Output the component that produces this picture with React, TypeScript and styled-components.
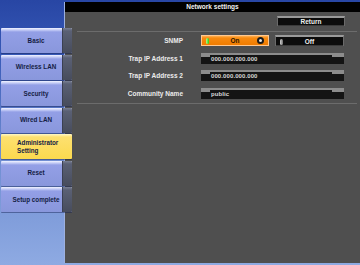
import React from "react";
import styled, { createGlobalStyle } from "styled-components";

const GlobalStyle = createGlobalStyle`
  html, body {
    margin: 0;
    padding: 0;
    background: #8ca8e0;
  }
  body {
    font-family: "Liberation Sans", Arial, sans-serif;
  }
`;

const Screen = styled.div`
  width: 360px;
  height: 265px;
  display: flex;
  flex-flow: row nowrap;
  align-items: flex-start;
  overflow: hidden;
  background: linear-gradient(180deg, #2846a4 0%, #3658b6 20%, #6c8ad0 55%, #8eaae2 100%);
`;

const Sidebar = styled.nav`
  position: relative;
  z-index: 1;
  flex: 0 0 71px;
  padding: 28px 0 0 1px;
  display: flex;
  flex-flow: column nowrap;
  gap: 1.5px;
`;

const Tab = styled.div<{ $active?: boolean }>`
  height: 25px;
  display: flex;
  flex-flow: row nowrap;
  border-radius: 1px;
  overflow: hidden;
  box-shadow: 0 1px 0 rgba(20, 30, 80, 0.45);
  background: ${({ $active }) =>
    $active
      ? "linear-gradient(180deg, #fff8c8 0px, #fde070 3px, #fbd94e 100%)"
      : "linear-gradient(180deg, #f2f4ff 0px, #c4ccf6 2px, #939fe6 4px, #8997dc 100%)"};
`;

const TabFace = styled.div<{ $active?: boolean }>`
  flex: 1 1 auto;
  min-width: 0;
  display: flex;
  align-items: center;
  justify-content: ${({ $active }) => ($active ? "flex-start" : "center")};
  padding: ${({ $active }) => ($active ? "1px 0 0 16px" : "1px 0 0 9px")};
  font: bold 6.3px/8.4px "Liberation Sans", Arial, sans-serif;
  color: #141c44;
  white-space: pre;
`;

const TabEar = styled.div`
  flex: 0 0 9px;
  background: linear-gradient(180deg, #7a8094 0px, #5a6074 3px, #474c5c 100%);
  border-left: 1px solid #3a3f52;
`;

const Panel = styled.main`
  flex: 0 0 295px;
  height: 261px;
  margin: 2px 0 0 -8px;
  background: #4f4f4f;
  border-left: 1px solid #9cb0e0;
  display: flex;
  flex-flow: column nowrap;
`;

const TitleBar = styled.header`
  height: 10px;
  background: #000;
  color: #f2f2f2;
  font: bold 6.5px/10px "Liberation Sans", Arial, sans-serif;
  text-align: center;
`;

const TopRow = styled.div`
  display: flex;
  justify-content: flex-end;
  padding: 4px 15px 0 0;
`;

const Divider = styled.hr<{ $top: number }>`
  margin: ${({ $top }) => $top}px 3px 0 12px;
  border: 0;
  height: 1px;
  background: #6c6c6c;
`;

const DarkButton = styled.button<{ $w: number }>`
  width: ${({ $w }) => $w}px;
  height: 10px;
  padding: 0;
  position: relative;
  background: #0c0c0c;
  border: 0;
  border-top: 2px solid #9a9a9a;
  border-left: 1px solid #6a6a6a;
  border-right: 1px solid #6a6a6a;
  box-shadow: inset 0 -1px 0 #3a3a3a;
  color: #f0f0f0;
  font: bold 6.5px/8px "Liberation Sans", Arial, sans-serif;
  text-align: center;
`;

const Form = styled.div`
  margin: 3px 0 0 0;
  display: grid;
  grid-template-columns: 118px 143px;
  grid-auto-rows: 11px;
  column-gap: 18px;
  row-gap: 6.5px;
`;

const Label = styled.label`
  text-align: right;
  color: #ececec;
  font: bold 6.5px/11px "Liberation Sans", Arial, sans-serif;
  white-space: nowrap;
`;

const Toggle = styled.div`
  display: flex;
  gap: 6px;
`;

const OnButton = styled.button`
  flex: 0 0 68px;
  height: 11px;
  padding: 0;
  position: relative;
  background: linear-gradient(180deg, #ffb050 0px, #f88a10 2px, #f07c00 100%);
  border: 1px solid #ffc890;
  color: #2a1400;
  font: bold 6.5px/9px "Liberation Sans", Arial, sans-serif;
  text-align: center;
`;

const OffButton = styled(DarkButton)`
  flex: 0 0 69px;
  height: 11px;
`;

const Lamp = styled.span<{ $on?: boolean }>`
  position: absolute;
  left: 4px;
  top: 1.5px;
  width: 3px;
  height: 6px;
  border-radius: 2px;
  background: ${({ $on }) =>
    $on ? "linear-gradient(90deg, #b8ff90, #28d010)" : "linear-gradient(90deg, #d0d0d0, #707070)"};
`;

const Radio = styled.span`
  position: absolute;
  right: 4px;
  top: 1px;
  width: 3px;
  height: 3px;
  border-radius: 50%;
  background: #e8e8e8;
  border: 2px solid #1a1a1a;
`;

const Field = styled.div`
  position: relative;
  height: 11px;
  background: #141414;
  border-top: 2px solid #8c8c8c;
  box-sizing: border-box;
  padding-left: 10px;
  color: #d8d8d8;
  font: bold 6px/8px "Liberation Sans", Arial, sans-serif;
  letter-spacing: 0.1px;

  &::before,
  &::after {
    content: "";
    position: absolute;
    top: 0;
    height: 2px;
    background: #8c8c8c;
  }
  &::before {
    left: 0;
    width: 9px;
  }
  &::after {
    right: 0;
    width: 12px;
  }
`;

const tabs = [
  "Basic",
  "Wireless LAN",
  "Security",
  "Wired LAN",
  "Administrator\nSetting",
  "Reset",
  "Setup complete",
];

export default function App() {
  return (
    <>
      <GlobalStyle />
      <Screen>
        <Sidebar>
          {tabs.map((t) => {
            const active = t.startsWith("Administrator");
            return (
              <Tab key={t} $active={active}>
                <TabFace $active={active}>{t}</TabFace>
                {!active && <TabEar />}
              </Tab>
            );
          })}
        </Sidebar>
        <Panel>
          <TitleBar>Network settings</TitleBar>
          <TopRow>
            <DarkButton $w={68}>Return</DarkButton>
          </TopRow>
          <Divider $top={5} />
          <Form>
            <Label>SNMP</Label>
            <Toggle>
              <OnButton>
                <Lamp $on />
                On
                <Radio />
              </OnButton>
              <OffButton $w={69}>
                <Lamp />
                Off
              </OffButton>
            </Toggle>
            <Label>Trap IP Address 1</Label>
            <Field>000.000.000.000</Field>
            <Label>Trap IP Address 2</Label>
            <Field>000.000.000.000</Field>
            <Label>Community Name</Label>
            <Field>public</Field>
          </Form>
          <Divider $top={4} />
        </Panel>
      </Screen>
    </>
  );
}
